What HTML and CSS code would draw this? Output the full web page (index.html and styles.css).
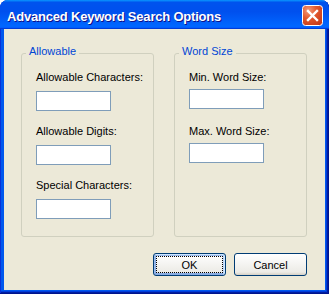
FILE: index.html
```html
<!DOCTYPE html>
<html lang="en">
<head>
    <meta charset="UTF-8">
    <title>Advanced Keyword Search Options</title>
    <link rel="stylesheet" href="styles.css">
</head>
<body>
    <div class="window">
        <div class="title-bar">
            <span class="title-text">Advanced Keyword Search Options</span>
            <button class="close-button" aria-label="Close">
                <svg width="21" height="21" viewBox="0 0 21 21">
                    <defs>
                        <radialGradient id="closeFill" cx="30%" cy="25%" r="90%">
                            <stop offset="0" stop-color="#f39b7c"/>
                            <stop offset="0.45" stop-color="#e2582d"/>
                            <stop offset="1" stop-color="#c4381a"/>
                        </radialGradient>
                    </defs>
                    <rect x="0.5" y="0.5" width="20" height="20" rx="3" fill="url(#closeFill)" stroke="#ffffff"/>
                    <path d="M6 6 L15 15 M15 6 L6 15" stroke="#ffffff" stroke-width="2.4" stroke-linecap="square"/>
                </svg>
            </button>
        </div>

        <div class="window-body">
            <div class="groups">
                <fieldset class="group group-allowable">
                    <legend>Allowable</legend>

                    <div class="field">
                        <label for="allowChars">Allowable Characters:</label>
                        <input type="text" id="allowChars">
                    </div>

                    <div class="field">
                        <label for="allowDigits">Allowable Digits:</label>
                        <input type="text" id="allowDigits">
                    </div>

                    <div class="field">
                        <label for="specialChars">Special Characters:</label>
                        <input type="text" id="specialChars">
                    </div>
                </fieldset>

                <fieldset class="group group-size">
                    <legend>Word Size</legend>

                    <div class="field">
                        <label for="minWord">Min. Word Size:</label>
                        <input type="text" id="minWord">
                    </div>

                    <div class="field">
                        <label for="maxWord">Max. Word Size:</label>
                        <input type="text" id="maxWord">
                    </div>
                </fieldset>
            </div>

            <div class="button-row">
                <button class="dialog-button default-button">OK</button>
                <button class="dialog-button">Cancel</button>
            </div>
        </div>
    </div>
</body>
</html>
```

FILE: styles.css
```css
html, body {
    margin: 0;
    padding: 0;
    overflow: hidden;
    background-color: #ffffff;
}

body {
    font-family: "Liberation Sans", Arial, sans-serif;
    font-size: 11px;
    color: #000;
}

.window {
    width: 329px;
    height: 294px;
    display: flex;
    flex-direction: column;
    background-color: #0058ee;
    border-radius: 8px 8px 0 0;
    box-shadow: inset -1px -1px #00138c, inset 1px 0 #0831d9, inset -2px -2px #001ea0, inset -3px -3px #003bda;
}

.title-bar {
    height: 29px;
    flex-shrink: 0;
    display: flex;
    align-items: center;
    padding: 0 6px 0 7px;
    border-radius: 8px 8px 0 0;
    background: linear-gradient(180deg, #0997ff, #0053ee 8%, #0050ee 40%, #0066ff 88%, #0066ff 93%, #005bff 95%, #003dd7 96%, #003dd7);
    box-sizing: border-box;
}

.title-text {
    flex: 1;
    padding-top: 3px;
    color: #fff;
    font-weight: bold;
    font-size: 13px;
    letter-spacing: -0.2px;
    text-shadow: 1px 1px #0f1089;
}

.close-button {
    width: 21px;
    height: 21px;
    padding: 0;
    margin-top: 2px;
    border: none;
    background: none;
    display: block;
}

.close-button svg {
    display: block;
}

.window-body {
    flex: 1;
    margin: 0 4px 4px 4px;
    padding: 16px 18px 0 17px;
    background-color: #ece9d8;
}

.groups {
    display: flex;
    gap: 20px;
}

.group {
    box-sizing: border-box;
    width: 133px;
    height: 192px;
    margin: 0;
    padding: 10px 0 0 0;
    border: 1px solid #d0d0bf;
    border-radius: 3px;
    min-width: 0;
}

.group legend {
    margin-left: 4px;
    padding: 0 3px 3px 3px;
    line-height: 13px;
    color: #0046d5;
}

.field {
    padding-left: 14px;
}

.field label {
    display: block;
    line-height: 13px;
    margin-bottom: 7px;
    white-space: nowrap;
}

.field input {
    display: block;
    box-sizing: border-box;
    width: 75px;
    height: 20px;
    margin: 0;
    border: 1px solid #7f9db9;
    background-color: #fff;
}

.field + .field {
    margin-top: 14px;
}

.group-size .field label {
    margin-bottom: 5px;
}

.group-size .field + .field {
    margin-top: 16px;
}

.button-row {
    display: flex;
    justify-content: flex-end;
    gap: 8px;
    margin-top: 16px;
}

.dialog-button {
    width: 73px;
    height: 23px;
    padding: 0;
    font-family: "Liberation Sans", Arial, sans-serif;
    font-size: 11px;
    color: #000;
    border: 1px solid #003c74;
    border-radius: 3px;
    background: linear-gradient(180deg, #fff, #ecebe6 86%, #d6d0c5);
}

.default-button {
    box-shadow: inset -1px 1px #cee7ff, inset 1px 2px #98b8ea, inset -2px 2px #bcd4f6, inset 1px -1px #89ade4, inset 2px -2px #89ade4;
    outline: 1px dotted #000;
    outline-offset: -4px;
}
```
